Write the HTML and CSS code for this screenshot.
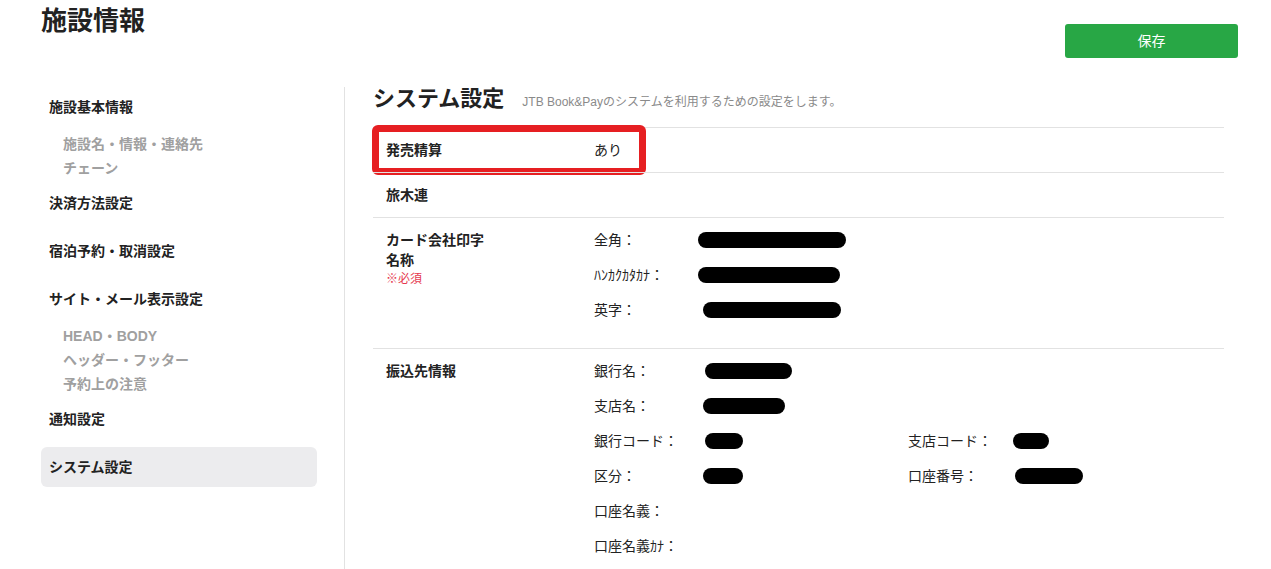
FILE: index.html
```html
<!DOCTYPE html>
<html lang="ja">
<head>
    <meta charset="UTF-8">
    <meta name="viewport" content="width=device-width, initial-scale=1.0">
    <title>施設情報</title>
    <link rel="stylesheet" href="styles.css">
</head>
<body>
    <div class="page-header">
        <h1 class="page-title">施設情報</h1>
        <a href="javascript:;" class="save-btn">保存</a>
    </div>
    <div class="layout">
        <!-- サイドメニュー -->
        <div class="side-nav">
            <a href="javascript:;" class="nav-item">施設基本情報</a>
            <div class="nav-sub">
                <a href="javascript:;">施設名・情報・連絡先</a>
                <a href="javascript:;">チェーン</a>
            </div>
            <a href="javascript:;" class="nav-item">決済方法設定</a>
            <a href="javascript:;" class="nav-item">宿泊予約・取消設定</a>
            <a href="javascript:;" class="nav-item">サイト・メール表示設定</a>
            <div class="nav-sub">
                <a href="javascript:;">HEAD・BODY</a>
                <a href="javascript:;">ヘッダー・フッター</a>
                <a href="javascript:;">予約上の注意</a>
            </div>
            <a href="javascript:;" class="nav-item">通知設定</a>
            <a href="javascript:;" class="nav-item active">システム設定</a>
        </div>
        <!-- メイン -->
        <div class="main">
            <div class="main-head">
                <h2 class="main-title">システム設定</h2>
                <span class="main-desc">JTB Book&amp;Payのシステムを利用するための設定をします。</span>
            </div>
            <div class="set-table">
                <div class="set-row highlight">
                    <div class="set-label">発売精算</div>
                    <div class="set-value">あり</div>
                    <span class="mark-box"></span>
                </div>
                <div class="set-row">
                    <div class="set-label">旅木連</div>
                    <div class="set-value"></div>
                </div>
                <div class="set-row">
                    <div class="set-label">カード会社印字<br>名称<span class="required">※必須</span></div>
                    <div class="set-value">
                        <div class="info-grid">
                            <span class="info-key">全角：</span>
                            <span class="info-val"><i class="mask" style="width:148px;margin-left:0"></i></span>
                            <span class="info-key">ﾊﾝｶｸｶﾀｶﾅ：</span>
                            <span class="info-val"><i class="mask" style="width:142px;margin-left:0"></i></span>
                            <span class="info-key">英字：</span>
                            <span class="info-val"><i class="mask" style="width:138px;margin-left:5px"></i></span>
                        </div>
                    </div>
                </div>
                <div class="set-row">
                    <div class="set-label">振込先情報</div>
                    <div class="set-value">
                        <div class="info-grid bank">
                            <span class="info-key">銀行名：</span>
                            <span class="info-val wide"><i class="mask" style="width:87px;margin-left:7px"></i></span>
                            <span class="info-key">支店名：</span>
                            <span class="info-val wide"><i class="mask" style="width:82px;margin-left:5px"></i></span>
                            <span class="info-key">銀行コード：</span>
                            <span class="info-val"><i class="mask" style="width:38px;margin-left:7px"></i></span>
                            <span class="info-key">支店コード：</span>
                            <span class="info-val"><i class="mask" style="width:36px;margin-left:0"></i></span>
                            <span class="info-key">区分：</span>
                            <span class="info-val"><i class="mask" style="width:40px;margin-left:5px"></i></span>
                            <span class="info-key">口座番号：</span>
                            <span class="info-val"><i class="mask" style="width:68px;margin-left:2px"></i></span>
                            <span class="info-key">口座名義：</span>
                            <span class="info-val wide"></span>
                            <span class="info-key">口座名義ｶﾅ：</span>
                            <span class="info-val wide"></span>
                        </div>
                    </div>
                </div>
            </div>
        </div>
    </div>
</body>
</html>
```

FILE: styles.css
```css
body{
    margin: 0px;
    font-family: "Liberation Sans", "Noto Sans CJK JP", sans-serif;
    font-size: 14px;
    color: #222222;
    background: #ffffff;
}
a{
    text-decoration: none;
    color: inherit;
}
h1,
h2{
    margin: 0px;
    padding: 0px;
}
.page-header{
    display: flex;
    justify-content: space-between;
    align-items: flex-start;
    height: 87px;
    padding: 4px 33px 0px 41px;
    box-sizing: border-box;
}
.page-title{
    font-size: 26px;
    line-height: 34px;
    font-weight: bold;
    color: #222222;
}
.save-btn{
    display: block;
    width: 173px;
    height: 34px;
    margin-top: 20px;
    line-height: 34px;
    text-align: center;
    color: #ffffff;
    background: #28a745;
    border-radius: 3px;
    font-size: 14px;
}
.layout{
    display: flex;
    align-items: stretch;
}
.side-nav{
    width: 276px;
    margin-left: 41px;
    margin-right: 27px;
}
.nav-item{
    display: block;
    height: 40px;
    line-height: 40px;
    padding-left: 8px;
    margin: 0px 0px 8px 0px;
    font-weight: bold;
    border-radius: 6px;
}
.nav-item.active{
    background: #ececee;
}
.nav-sub{
    margin: -3px 0px 3px 0px;
}
.nav-sub a{
    display: block;
    height: 24px;
    line-height: 24px;
    padding-left: 22px;
    font-weight: bold;
    color: #a0a0a0;
}
.main{
    flex: 1;
    border-left: 1px solid #e2e2e2;
    padding: 0px 47px 0px 28px;
}
.main-head{
    display: flex;
    align-items: baseline;
    margin-bottom: 16px;
}
.main-title{
    font-size: 22px;
    line-height: 24px;
    font-weight: bold;
    margin-right: 18px;
}
.main-desc{
    font-size: 12px;
    color: #8a8a8a;
}
.set-row{
    position: relative;
    display: flex;
    border-top: 1px solid #e2e2e2;
    padding: 12px 13px 12px 13px;
    line-height: 20px;
}
.set-label{
    width: 208px;
    flex-shrink: 0;
    font-weight: bold;
}
.set-value{
    flex: 1;
}
.required{
    display: block;
    font-size: 12px;
    font-weight: normal;
    color: #e63a4f;
    line-height: 18px;
}
.mark-box{
    position: absolute;
    left: -1px;
    top: -3px;
    width: 274px;
    height: 50px;
    box-sizing: border-box;
    border: 7px solid #e61f22;
    border-radius: 6px;
}
.info-grid{
    display: grid;
    grid-template-columns: 104px 1fr;
    row-gap: 15px;
    margin-bottom: 16px;
}
.info-grid.bank{
    grid-template-columns: 104px 210px 105px 1fr;
}
.info-grid.bank .info-val.wide{
    grid-column: span 3;
}
.info-key{
    height: 20px;
    white-space: nowrap;
}
.info-val{
    display: flex;
    align-items: center;
    height: 20px;
}
.mask{
    display: block;
    height: 16px;
    background: #000000;
    border-radius: 8px;
}
```
